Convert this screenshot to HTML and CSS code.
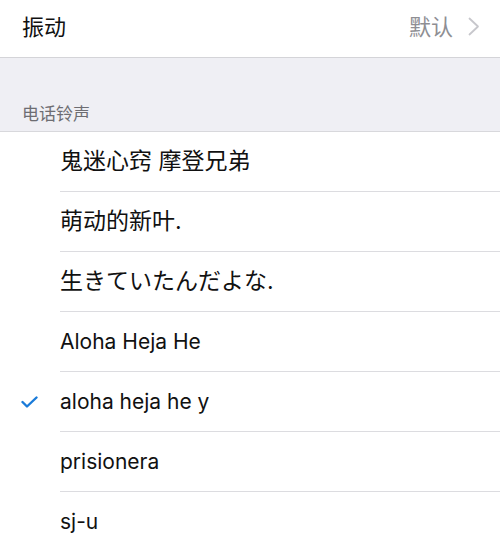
FILE: index.html
```html
<!DOCTYPE html>
<html lang="zh">
<head>
<meta charset="utf-8">
<link rel="stylesheet" href="styles.css">
</head>
<body>
<div class="cell top">
  <span class="label">振动</span>
  <span class="value">默认</span>
  <svg class="chev" width="12" height="19" viewBox="0 0 12 19"><path d="M1.5 1.5 L10 9.5 L1.5 17.5" fill="none" stroke="#c7c7cc" stroke-width="1.8" stroke-linecap="round" stroke-linejoin="round"/></svg>
</div>
<div class="group">
  <div class="ghead">电话铃声</div>
</div>
<div class="list">
  <div class="row"><span class="mark"></span><span class="txt cjk">鬼迷心窍 摩登兄弟</span></div>
  <div class="row"><span class="mark"></span><span class="txt cjk">萌动的新叶.</span></div>
  <div class="row"><span class="mark"></span><span class="txt cjk">生きていたんだよな.</span></div>
  <div class="row"><span class="mark"></span><span class="txt latin">Aloha Heja He</span></div>
  <div class="row"><span class="mark"><svg width="17" height="12" viewBox="0 0 17 12"><path d="M1.5 6 L6 10.5 L15.5 1.5" fill="none" stroke="#1a7bd9" stroke-width="2.4" stroke-linecap="round" stroke-linejoin="round"/></svg></span><span class="txt latin">aloha heja he y</span></div>
  <div class="row"><span class="mark"></span><span class="txt latin">prisionera</span></div>
  <div class="row"><span class="mark"></span><span class="txt latin">sj-u</span></div>
</div>
</body>
</html>
```
FILE: styles.css
```css
html, body {
  margin: 0;
  padding: 0;
  background: #ffffff;
  font-family: "Inter", "Noto Sans CJK SC", sans-serif;
  color: #111111;
  overflow: hidden;
}
.cell.top {
  display: flex;
  align-items: center;
  padding: 0 20px 8px 22px;
  box-sizing: border-box;
  height: 58px;
  border-bottom: 1px solid #d4d4d8;
}
.label {
  font-size: 22px;
  flex: 1;
}
.value {
  font-size: 22px;
  color: #8e8e93;
  margin-right: 15px;
}
.chev { display: block; margin-top: 3px; }
.group {
  background: #efeff4;
  height: 74px;
  display: flex;
  align-items: flex-end;
  padding-left: 22px;
  border-bottom: 1px solid #d8d8dc;
  box-sizing: border-box;
}
.ghead {
  font-size: 17px;
  color: #6d6d72;
  padding-bottom: 6px;
}
.list { background: #fff; }
.row {
  height: 60px;
  display: flex;
  align-items: stretch;
}
.mark {
  width: 60px;
  flex: none;
  display: flex;
  align-items: center;
  padding-left: 21px;
  box-sizing: border-box;
}
.txt {
  flex: 1;
  display: flex;
  align-items: center;
  border-bottom: 1px solid #dcdce0;
  box-sizing: border-box;
}
.txt.cjk {
  font-size: 23px;
  padding-bottom: 6px;
}
.txt.latin {
  font-size: 21px;
}
```
